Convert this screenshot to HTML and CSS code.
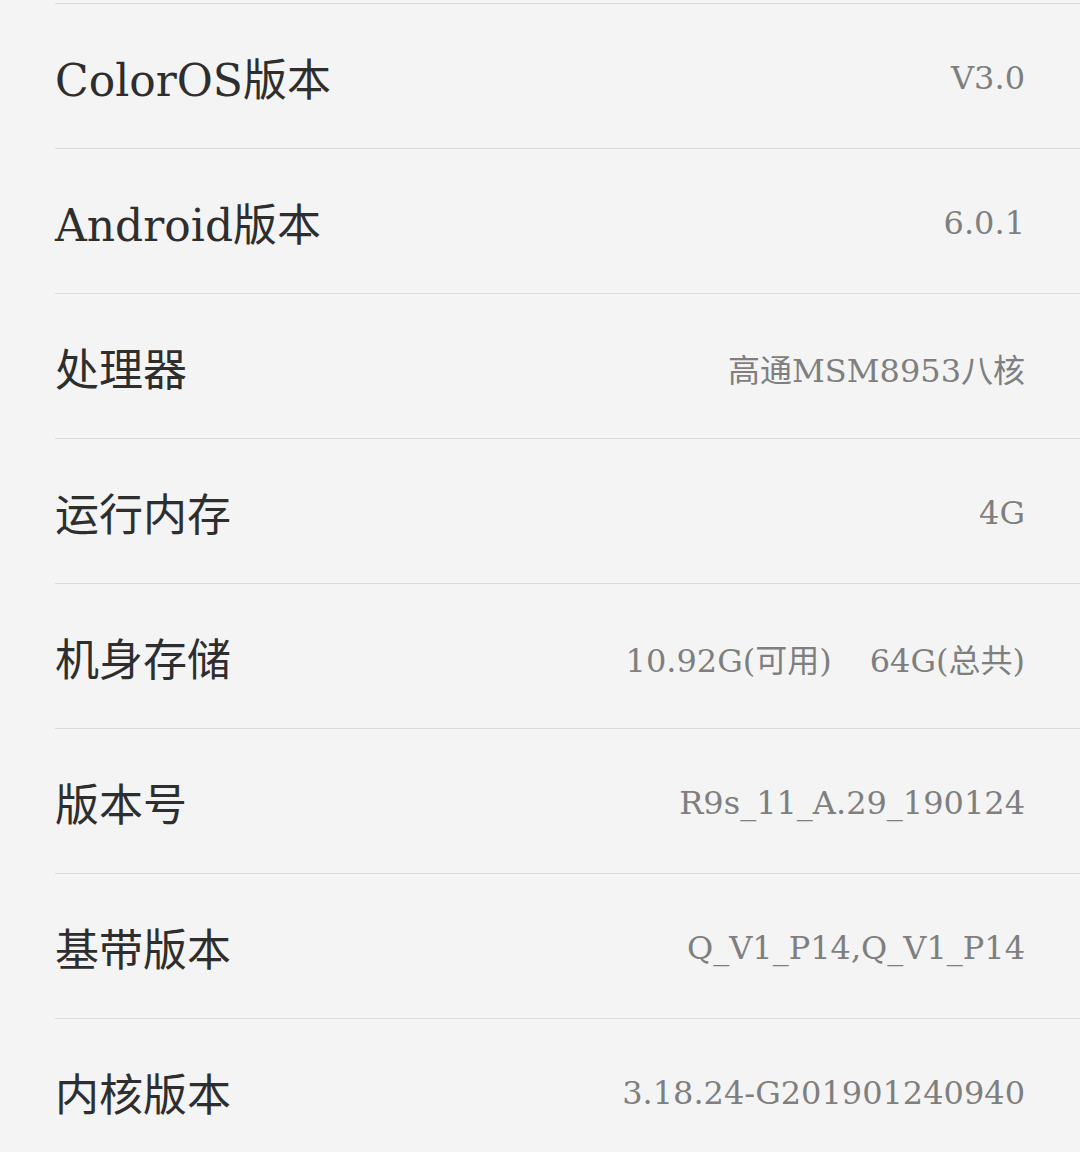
FILE: index.html
```html
<!DOCTYPE html>
<html lang="zh-CN">
<head>
    <meta charset="UTF-8">
    <meta name="viewport" content="width=device-width, initial-scale=1.0">
    <title>关于手机</title>
    <link rel="stylesheet" href="styles.css">
</head>
<body>

    <ul class="info-list">
        <li class="row"><span class="label">ColorOS版本</span><span class="value">V3.0</span></li>
        <li class="row"><span class="label">Android版本</span><span class="value">6.0.1</span></li>
        <li class="row"><span class="label">处理器</span><span class="value">高通MSM8953八核</span></li>
        <li class="row"><span class="label">运行内存</span><span class="value">4G</span></li>
        <li class="row"><span class="label">机身存储</span><span class="value">10.92G(可用)<span class="gap">64G(总共)</span></span></li>
        <li class="row"><span class="label">版本号</span><span class="value">R9s_11_A.29_190124</span></li>
        <li class="row"><span class="label">基带版本</span><span class="value">Q_V1_P14,Q_V1_P14</span></li>
        <li class="row"><span class="label">内核版本</span><span class="value">3.18.24-G201901240940</span></li>
    </ul>

</body>
</html>
```

FILE: styles.css
```css
body {
    margin: 0;
    background-color: #f4f4f4;
    font-family: "DejaVu Serif", "Noto Sans CJK SC", serif;
}
.info-list {
    list-style: none;
    margin: 3px 0 0 0;
    padding: 0;
}
.row {
    display: flex;
    justify-content: space-between;
    align-items: center;
    box-sizing: border-box;
    height: 145px;
    margin-left: 55px;
    padding-right: 55px;
    padding-top: 2px;
    border-top: 1px solid #dadada;
}
.label {
    font-size: 44px;
    color: #2e2e2e;
}
.value {
    font-size: 32px;
    color: #7f7f7f;
    padding-top: 2px;
}
.gap {
    margin-left: 38px;
}
```
